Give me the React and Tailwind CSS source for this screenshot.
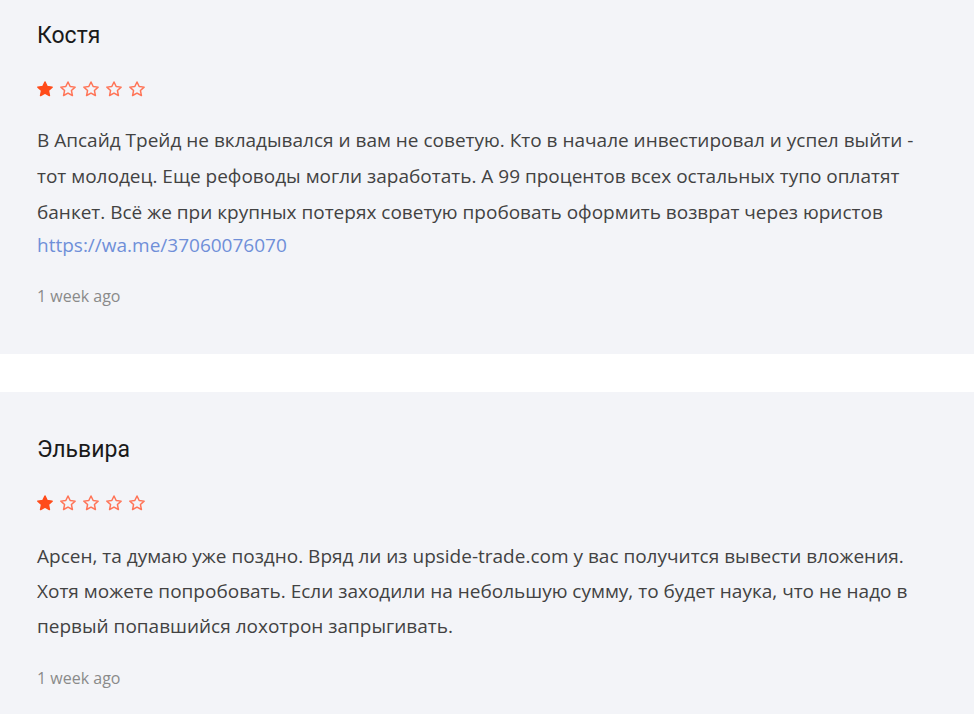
const REVIEWS = [
  {
    name: "Костя",
    rating: 1,
    text: "В Апсайд Трейд не вкладывался и вам не советую. Кто в начале инвестировал и успел выйти - тот молодец. Еще рефоводы могли заработать. А 99 процентов всех остальных тупо оплатят банкет. Всё же при крупных потерях советую пробовать оформить возврат через юристов",
    link: "https://wa.me/37060076070",
    time: "1 week ago",
    first: true,
  },
  {
    name: "Эльвира",
    rating: 1,
    text: "Арсен, та думаю уже поздно. Вряд ли из upside-trade.com у вас получится вывести вложения. Хотя можете попробовать. Если заходили на небольшую сумму, то будет наука, что не надо в первый попавшийся лохотрон запрыгивать.",
    time: "1 week ago",
  },
];

function Star({ filled }) {
  return (
    <svg width="18" height="18" viewBox="0 0 24 24" className="shrink-0">
      <path
        d="M12 2.6l2.9 6.1 6.6.8-4.9 4.6 1.3 6.6L12 17.4l-5.9 3.3 1.3-6.6-4.9-4.6 6.6-.8z"
        fill={filled ? "#ff4b1a" : "none"}
        stroke={filled ? "#ff4b1a" : "#ff7457"}
        strokeWidth="2"
        strokeLinejoin="round"
      />
    </svg>
  );
}

function Review({ r }) {
  return (
    <div className={`bg-[#f3f4f8] pl-[37px] pr-[37px] ${r.first ? "pt-[22px] pb-[48px]" : "pt-[44px] pb-[40px]"}`}>
      <h3 className="text-[23px] leading-[28px] text-[#1a1a1a]" style={{ fontFamily: "Roboto, 'Liberation Sans', sans-serif" }}>
        {r.name}
      </h3>
      <div className="flex gap-[5px] mt-[30px] -ml-[1px]">
        {[1, 2, 3, 4, 5].map((i) => (
          <Star key={i} filled={i <= r.rating} />
        ))}
      </div>
      <div
        className={`text-[19px] text-[#424242] ${r.first ? "mt-[24px] leading-[36px]" : "mt-[27px] leading-[35px]"}`}
        style={{ fontFamily: "'Open Sans', sans-serif" }}
      >
        <p>{r.text}</p>
        {r.link && (
          <a href="#" className="text-[#6f8fd8] block leading-[30px]">{r.link}</a>
        )}
        <p className={`text-[16px] text-[#8a8a8a] leading-[20px] ${r.link ? "mt-[26px]" : "mt-[24px]"}`}>{r.time}</p>
      </div>
    </div>
  );
}

export default function App() {
  return (
    <div className="min-h-screen bg-white flex flex-col gap-[38px]">
      {REVIEWS.map((r) => (
        <Review key={r.name} r={r} />
      ))}
    </div>
  );
}
